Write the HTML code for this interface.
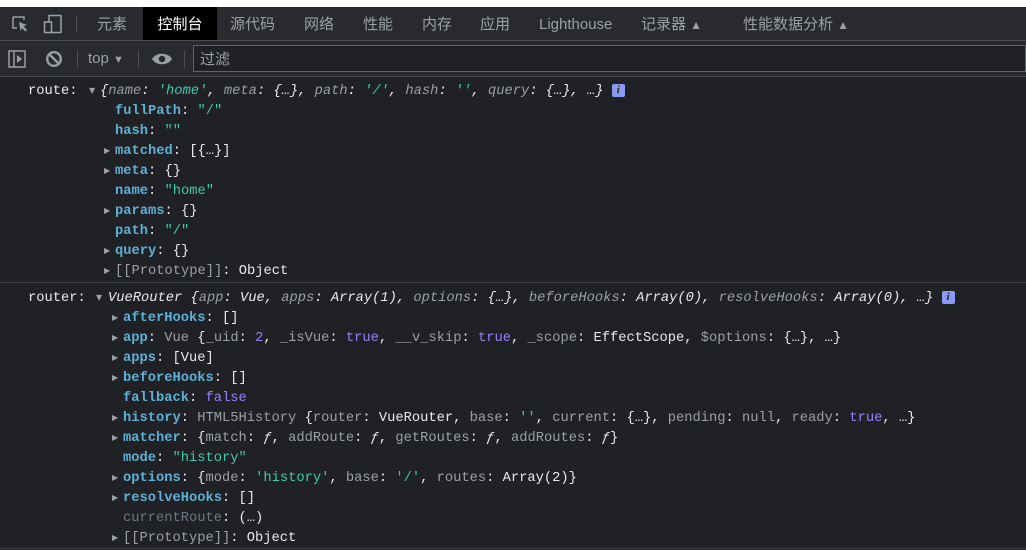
<!DOCTYPE html>
<html><head><meta charset="utf-8"><style>
*{margin:0;padding:0;box-sizing:border-box}
body{width:1026px;height:550px;background:#202124;overflow:hidden;position:relative;font-family:"Liberation Sans","Noto Sans CJK SC",sans-serif}
.top{position:absolute;left:0;top:0;width:1026px;height:7px;background:#fff}
.tabs{position:absolute;left:0;top:7px;width:1026px;height:34px;background:#292a2d;border-bottom:1px solid #494c50}
.tab{position:absolute;top:0;height:33px;line-height:35px;font-size:15px;color:#9aa0a6}
.tb{position:absolute;left:0;top:41px;width:1026px;height:36px;background:#292a2d;border-bottom:1px solid #494c50}
.sep{position:absolute;width:1px;background:#494c50}
.code{font-family:"Liberation Mono",monospace;font-size:13.75px;position:absolute;white-space:pre;color:#e8eaed;line-height:20px}
.k{color:#5db0d7;font-weight:bold}
.s{color:#3fc9b0}
.n{color:#9980ff}
.g{color:#9aa0a6}
.gi{color:#9aa0a6;font-style:italic}
.i{font-style:italic}
.d{color:#6e7781}
.ar{color:#9aa0a6;font-size:8px;position:absolute;font-family:"DejaVu Sans",sans-serif}
.info{display:inline-block;width:13px;height:13px;background:#8a99f5;border-radius:2px;color:#202124;font-size:11px;line-height:13px;text-align:center;font-style:italic;font-family:"Liberation Serif",serif;font-weight:bold;vertical-align:1px}
</style></head><body>
<div class="top"></div>
<div class="tabs">
<svg style="position:absolute;left:11px;top:8px" width="18" height="18" viewBox="0 0 18 18"><path d="M2 2h11v3M2 2v11h4" fill="none" stroke="#9aa0a6" stroke-width="1.5"/><path d="M8 7l8 3-3.5 1.2L16 15l-1.5 1.5-3.5-3.5L9.5 16z" fill="#9aa0a6"/></svg>
<svg style="position:absolute;left:43px;top:7px" width="20" height="20" viewBox="0 0 20 20"><rect x="6" y="1.5" width="12" height="17" fill="none" stroke="#9aa0a6" stroke-width="1.5"/><rect x="1.5" y="8" width="7" height="10.5" fill="#292a2d" stroke="#9aa0a6" stroke-width="1.5"/></svg>
<div class="sep" style="left:76px;top:8px;height:18px"></div>
<div class="tab" style="left:97px">元素</div>
<div class="tab" style="left:143px;width:74px;background:#000;color:#fff;text-align:center">控制台</div>
<div class="tab" style="left:230px">源代码</div>
<div class="tab" style="left:304px">网络</div>
<div class="tab" style="left:363px">性能</div>
<div class="tab" style="left:422px">内存</div>
<div class="tab" style="left:480px">应用</div>
<div class="tab" style="left:539px">Lighthouse</div>
<div class="tab" style="left:641px">记录器 <span style="font-size:12px">▲</span></div>
<div class="tab" style="left:743px">性能数据分析 <span style="font-size:12px">▲</span></div>
</div>
<div class="tb">
<svg style="position:absolute;left:8px;top:9px" width="18" height="18" viewBox="0 0 18 18"><rect x="1" y="1" width="16" height="16" fill="none" stroke="#9aa0a6" stroke-width="1.5"/><line x1="6" y1="1" x2="6" y2="17" stroke="#9aa0a6" stroke-width="1.5"/><path d="M9 5l5 4-5 4z" fill="#9aa0a6"/></svg>
<svg style="position:absolute;left:45px;top:9px" width="18" height="18" viewBox="0 0 18 18"><circle cx="9" cy="9" r="6.8" fill="none" stroke="#9aa0a6" stroke-width="2.4"/><line x1="4.5" y1="4.5" x2="13.5" y2="13.5" stroke="#9aa0a6" stroke-width="2.4"/></svg>
<div class="sep" style="left:77px;top:9px;height:18px"></div>
<div style="position:absolute;left:88px;top:9px;font-size:15px;color:#9aa0a6">top <span style="font-size:11px">▼</span></div>
<div class="sep" style="left:138px;top:9px;height:18px"></div>
<svg style="position:absolute;left:151px;top:11px" width="22" height="14" viewBox="0 0 22 14"><path d="M1 7C5 0 17 0 21 7C17 14 5 14 1 7z" fill="#9aa0a6"/><circle cx="11" cy="7" r="3.2" fill="#292a2d"/></svg>
<div class="sep" style="left:184px;top:9px;height:18px"></div>
<div style="position:absolute;left:193px;top:4px;width:833px;height:27px;background:#202124;border:1px solid #5f6368;font-size:15px;color:#9aa0a6;line-height:27px;padding-left:6px">过滤</div>
</div>

<div class="code" style="left:28px;top:82px">route: </div>
<span class="ar" style="left:89px;top:86px">▼</span>
<div class="code" style="left:100px;top:82px"><span class="i">{</span><span class="gi">name</span><span class="i">: </span><span class="s i">'home'</span><span class="i">, </span><span class="gi">meta</span><span class="i">: {…}, </span><span class="gi">path</span><span class="i">: </span><span class="s i">'/'</span><span class="i">, </span><span class="gi">hash</span><span class="i">: </span><span class="s i">''</span><span class="i">, </span><span class="gi">query</span><span class="i">: {…}, …}</span> <span class="info">i</span></div>
<div class="code" style="left:115px;top:102px"><span class="k">fullPath</span>: <span class="s">"/"</span>
<span class="k">hash</span>: <span class="s">""</span>
<span class="k">matched</span>: [{…}]
<span class="k">meta</span>: {}
<span class="k">name</span>: <span class="s">"home"</span>
<span class="k">params</span>: {}
<span class="k">path</span>: <span class="s">"/"</span>
<span class="k">query</span>: {}
<span class="g">[[Prototype]]</span>: Object</div>
<span class="ar" style="left:104px;top:146px">▶</span>
<span class="ar" style="left:104px;top:166px">▶</span>
<span class="ar" style="left:104px;top:206px">▶</span>
<span class="ar" style="left:104px;top:246px">▶</span>
<span class="ar" style="left:104px;top:266px">▶</span>

<div style="position:absolute;left:0;top:282px;width:1026px;height:1px;background:#3c3f43"></div>

<div class="code" style="left:28px;top:289px">router: </div>
<span class="ar" style="left:96px;top:293px">▼</span>
<div class="code" style="left:108px;top:289px"><span class="i">VueRouter {</span><span class="gi">app</span><span class="i">: Vue, </span><span class="gi">apps</span><span class="i">: Array(1), </span><span class="gi">options</span><span class="i">: {…}, </span><span class="gi">beforeHooks</span><span class="i">: Array(0), </span><span class="gi">resolveHooks</span><span class="i">: Array(0), …}</span> <span class="info">i</span></div>
<div class="code" style="left:123px;top:309px"><span class="k">afterHooks</span>: []
<span class="k">app</span>: <span class="g">Vue</span> {<span class="g">_uid</span>: <span class="n">2</span>, <span class="g">_isVue</span>: <span class="n">true</span>, <span class="g">__v_skip</span>: <span class="n">true</span>, <span class="g">_scope</span>: EffectScope, <span class="g">$options</span>: {…}, …}
<span class="k">apps</span>: [Vue]
<span class="k">beforeHooks</span>: []
<span class="k">fallback</span>: <span class="n">false</span>
<span class="k">history</span>: <span class="g">HTML5History</span> {<span class="g">router</span>: VueRouter, <span class="g">base</span>: <span class="s">''</span>, <span class="g">current</span>: {…}, <span class="g">pending</span>: <span class="g">null</span>, <span class="g">ready</span>: <span class="n">true</span>, …}
<span class="k">matcher</span>: {<span class="g">match</span>: <span class="i">ƒ</span>, <span class="g">addRoute</span>: <span class="i">ƒ</span>, <span class="g">getRoutes</span>: <span class="i">ƒ</span>, <span class="g">addRoutes</span>: <span class="i">ƒ</span>}
<span class="k">mode</span>: <span class="s">"history"</span>
<span class="k">options</span>: {<span class="g">mode</span>: <span class="s">'history'</span>, <span class="g">base</span>: <span class="s">'/'</span>, <span class="g">routes</span>: Array(2)}
<span class="k">resolveHooks</span>: []
<span class="d">currentRoute</span>: (…)
<span class="g">[[Prototype]]</span>: Object</div>
<span class="ar" style="left:112px;top:313px">▶</span>
<span class="ar" style="left:112px;top:333px">▶</span>
<span class="ar" style="left:112px;top:353px">▶</span>
<span class="ar" style="left:112px;top:373px">▶</span>
<span class="ar" style="left:112px;top:413px">▶</span>
<span class="ar" style="left:112px;top:433px">▶</span>
<span class="ar" style="left:112px;top:473px">▶</span>
<span class="ar" style="left:112px;top:493px">▶</span>
<span class="ar" style="left:112px;top:533px">▶</span>
<div style="position:absolute;left:0;top:548px;width:1026px;height:1px;background:#3c3f43"></div>
</body></html>
